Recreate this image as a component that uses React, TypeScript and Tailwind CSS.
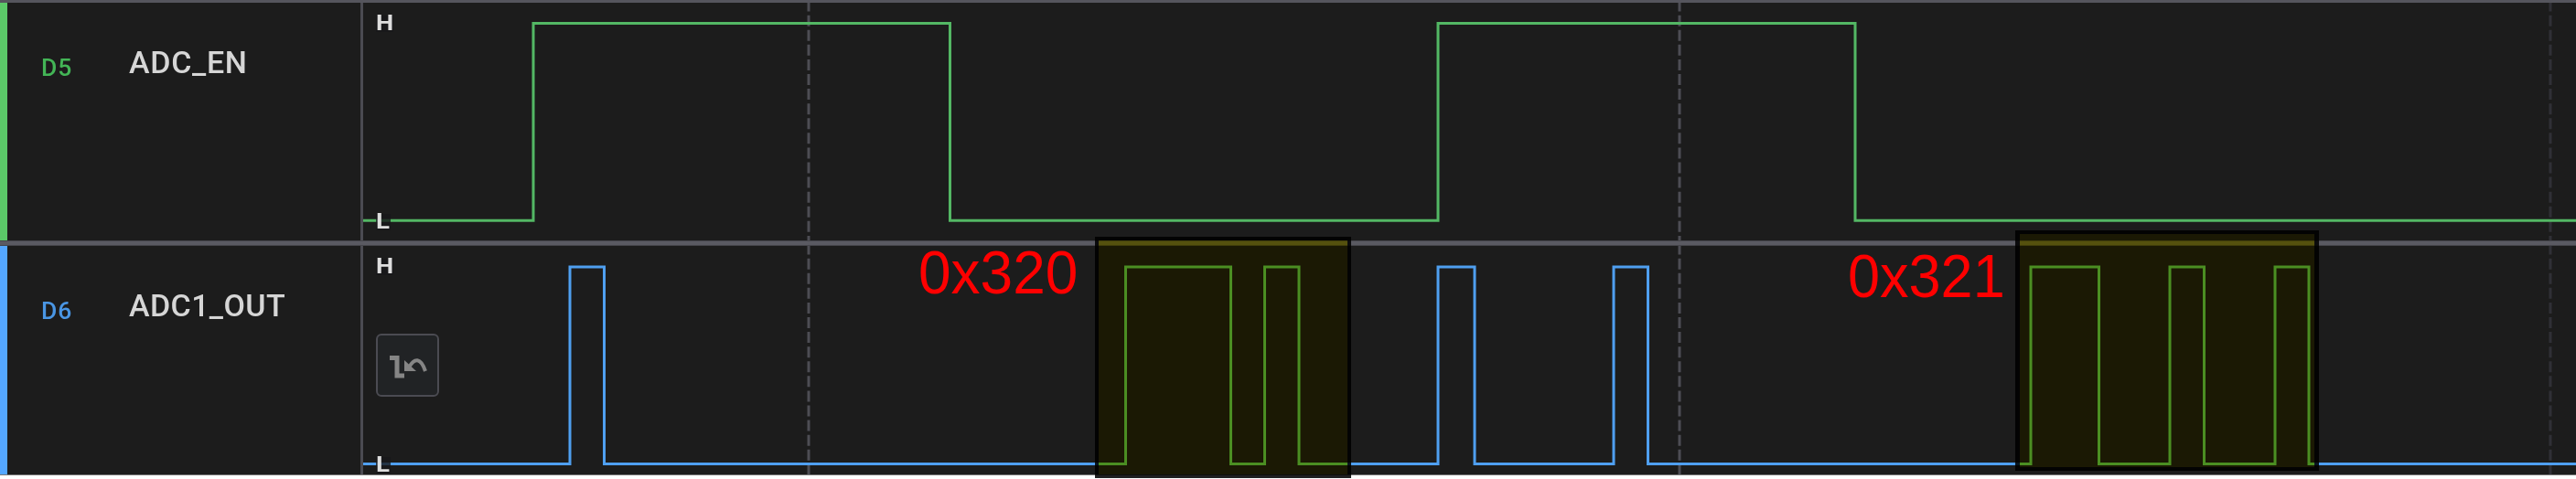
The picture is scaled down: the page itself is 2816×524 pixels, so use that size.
type Edge = [x: number, level: 0 | 1];

type ChannelData = {
  id: string;
  name: string;
  stroke: string;
  idClass: string;
  nameClass: string;
  barClass: string;
  height: number;
  high: number;
  low: number;
  edges: Edge[];
  trigger?: boolean;
};

const LEFT = 397;
const WIDTH = 2419;

const channels: ChannelData[] = [
  {
    id: "D5",
    name: "ADC_EN",
    stroke: "#53b764",
    idClass: "text-[#43b556]",
    nameClass: "tracking-[0.7px]",
    barClass: "bg-[#5bc968]",
    height: 260,
    high: 22.5,
    low: 238.2,
    edges: [[583, 1], [1038.5, 0], [1572, 1], [2028, 0]],
  },
  {
    id: "D6",
    name: "ADC1_OUT",
    stroke: "#4f9ff0",
    idClass: "text-[#4a96e4]",
    nameClass: "tracking-[0.4px]",
    barClass: "bg-[#54a7ff]",
    height: 250,
    high: 23,
    low: 238.5,
    edges: [
      [623, 1], [660.5, 0], [1230.5, 1], [1345.5, 0], [1382.5, 1], [1420, 0],
      [1572, 1], [1612, 0], [1764, 1], [1801.5, 0], [2220, 1], [2294.5, 0],
      [2372, 1], [2409.5, 0], [2487, 1], [2524, 0],
    ],
    trigger: true,
  },
];

const gridLines = [
  { x: 884, stroke: "#4d4d54" },
  { x: 1836, stroke: "#4d4d54" },
  { x: 2788, stroke: "#303036" },
];

function wave({ edges, high, low }: ChannelData) {
  return (
    `M0 ${low}` +
    edges.map(([x, level]) => `H${x - LEFT}V${level ? high : low}`).join("") +
    `H${WIDTH}`
  );
}

function TriggerButton() {
  return (
    <button className="flex size-[69px] items-center justify-center rounded-md border-2 border-[#4b4b52] bg-[#212325]">
      <svg width="44" height="28" viewBox="0 0 44 28" fill="none" stroke="#858585">
        <path d="M2 5.5H10V25H18" strokeWidth="5" />
        <path d="M23 16C29 5 36 5 41 20" strokeWidth="4" />
        <path d="M18 8V20H31Z" fill="#858585" stroke="none" />
      </svg>
    </button>
  );
}

function Channel({ data }: { data: ChannelData }) {
  return (
    <div className="flex">
      <div className={`w-2 shrink-0 ${data.barClass}`} />
      <div className="flex w-[386px] shrink-0 items-start pl-[37px] pt-[45px] font-[Roboto,sans-serif] font-medium">
        <span className={`mt-3 w-24 origin-left scale-x-[1.06] text-[25px] leading-[30px] tracking-[1px] ${data.idClass}`}>
          {data.id}
        </span>
        <span className={`text-[34px] leading-10 text-[#d6d6d6] ${data.nameClass}`}>{data.name}</span>
      </div>
      <div className="w-[3px] shrink-0 bg-[#4b4b52]" />
      <div className="grid w-[2419px]">
        <svg width={WIDTH} height={data.height} className="block [grid-area:1/1]">
          {gridLines.map(({ x, stroke }) => (
            <line key={x} x1={x - LEFT} x2={x - LEFT} y1="0" y2={data.height} stroke={stroke} strokeWidth="3" strokeDasharray="12 4.08" strokeDashoffset="2.4" />
          ))}
          <path d={wave(data)} fill="none" stroke={data.stroke} strokeWidth="3" />
        </svg>
        <div className="flex h-0 flex-col items-start gap-16 pl-3.5 pt-3.5 font-[Roboto,sans-serif] text-[23px] font-bold leading-[18px] text-[#dedede] [grid-area:1/1]">
          <div className="w-[19px] bg-[#18181a]/80">
            <span className="block origin-left scale-x-[1.18]">H</span>
          </div>
          <div className="h-[71px] shrink-0">{data.trigger && <TriggerButton />}</div>
          <div className="w-4 bg-[#18181a]/80">
            <span className="block origin-left scale-x-[1.2]">L</span>
          </div>
        </div>
      </div>
    </div>
  );
}

export default function App() {
  return (
    <div className="relative h-[524px] w-[2816px] overflow-hidden bg-white">
      <div className="flex h-[520px] flex-col border-b border-[#777] bg-[#1c1c1c]">
        <div className="h-[3px] shrink-0 bg-[#55555d]" />
        <Channel data={channels[0]} />
        <div className="h-1.5 shrink-0 border-y border-[#45454b] bg-[#5a5a62]" />
        <Channel data={channels[1]} />
      </div>
      <div className="absolute left-[1201px] top-[263px] h-[256px] w-[272px] bg-[#f0e424] mix-blend-multiply" />
      <div className="absolute left-[1197px] top-[259px] h-[264px] w-[280px] border-4 border-black/87" />
      <div className="absolute left-[2208px] top-[256px] h-[255px] w-[322px] bg-[#f0e424] mix-blend-multiply" />
      <div className="absolute left-[2203px] top-[252px] h-[263px] w-[332px] border-x-5 border-y-4 border-black/87" />
      <div className="absolute left-[1004px] top-[262px] origin-left scale-x-[0.97] font-['Liberation_Sans',sans-serif] text-[66px] leading-[72px] text-[#ff0000]">
        0x320
      </div>
      <div className="absolute left-[2020px] top-[266px] origin-left scale-x-[0.955] font-['Liberation_Sans',sans-serif] text-[66px] leading-[72px] text-[#ff0000]">
        0x321
      </div>
    </div>
  );
}
